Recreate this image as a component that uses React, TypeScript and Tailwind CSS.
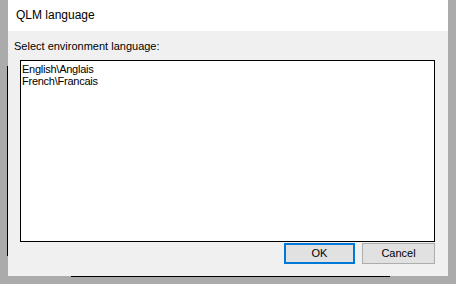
import React from "react";

export default function App() {
  const ui = { fontFamily: '"Liberation Sans", Arial, sans-serif' };
  return (
    <div className="w-[456px] h-[284px] bg-[#ababab] flex flex-col overflow-hidden">
      <div className="flex h-[276px]">
        <div className="w-[8px] flex flex-col pt-[66px]">
          <div className="ml-[7px] w-px h-[190px] bg-black" />
        </div>
        <div className="w-[440px] h-[276px] flex flex-col bg-[#f0f0f0]" style={ui}>
          <div className="h-[31px] bg-white pl-[8px] pt-[8px] text-[12px] leading-[15px] text-black">
            QLM language
          </div>
          <div className="pl-[6px] pt-[9px] text-[11px] leading-[13px] text-black">
            Select environment language:
          </div>
          <div className="ml-[12px] mt-[7px] w-[415px] h-[182px] border border-black bg-white px-[1px] pt-[2px] text-[11px] leading-[12px] tracking-[-0.25px] text-black">
            <div>English\Anglais</div>
            <div>French\Francais</div>
          </div>
          <div className="flex mt-[1px] ml-[276px] gap-[7px]">
            <button className="w-[71px] h-[21px] border-2 border-[#0078d7] bg-[#e1e1e1] text-[11px] leading-[15px] text-black">
              OK
            </button>
            <button className="w-[73px] h-[21px] border border-[#adadad] bg-[#e1e1e1] text-[11px] leading-[15px] text-black">
              Cancel
            </button>
          </div>
        </div>
        <div className="w-[8px]" />
      </div>
      <div className="h-[8px]">
        <div className="ml-[71px] w-[319px] h-px bg-black" />
      </div>
    </div>
  );
}
